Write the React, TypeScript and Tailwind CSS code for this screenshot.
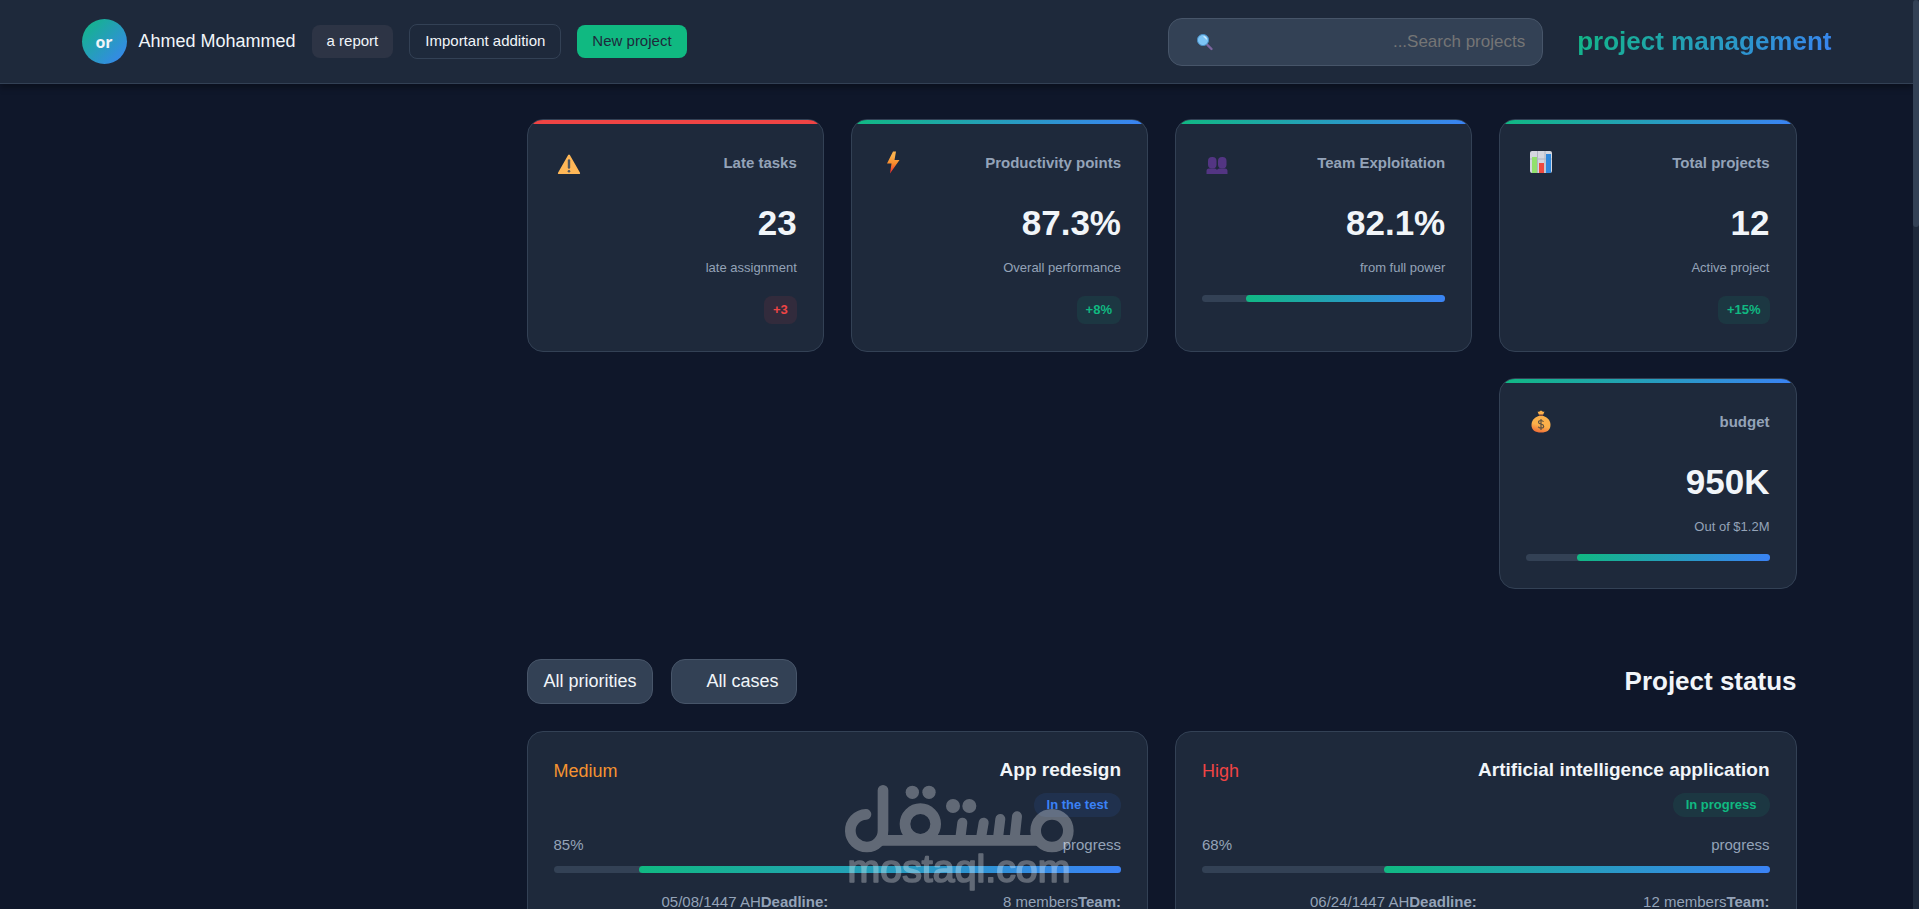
import React from 'react';

interface Stat {
  title: string;
  value: string;
  note: string;
  icon: React.ReactNode;
  change?: string;
  progress?: number;
  late?: boolean;
}

interface Project {
  name: string;
  priority: 'High' | 'Medium';
  status: string;
  progress: number;
  team: string;
  deadline: string;
}

const SearchIcon = () => (
  <svg viewBox="0 0 18 18" className="w-[18px] h-[18px]" aria-hidden="true">
    <path d="M11 11.500 15.500 16" stroke="#7d659f" strokeWidth="2.400" strokeLinecap="round" />
    <circle cx="7" cy="7" r="5.600" fill="#7cc4f5" stroke="#4a8cc0" strokeWidth="1" />
    <path d="M8 3.600a3.600 3.600 0 0 1 2.400 2.400" stroke="#d3eeff" strokeWidth="1.200" fill="none" strokeLinecap="round" />
  </svg>
);

const ChartIcon = () => (
  <svg viewBox="-1 1 28 28" className="w-7 h-7" aria-hidden="true">
    <rect x="3" y="3" width="22" height="22" rx="2" fill="#d5d7e0" />
    <path d="M3 11h22M10.500 3v22M18 3v22" stroke="#b0b4c2" strokeWidth="1" />
    <rect x="5" y="9" width="5" height="16" fill="#92e06d" />
    <rect x="12" y="15" width="5" height="10" fill="#ef4a3f" />
    <rect x="19" y="6" width="5" height="19" fill="#2f88dc" />
  </svg>
);

const TeamIcon = () => (
  <svg viewBox="-1 0 28 28" className="w-7 h-7" fill="#533583" aria-hidden="true">
    <rect x="5" y="8" width="8.500" height="11.500" rx="4" />
    <rect x="15" y="8" width="8.500" height="11.500" rx="4" />
    <path d="M3.500 25v-3a2.500 2.500 0 0 1 2.500-2.500h5.500a2.500 2.500 0 0 1 2.500 1.500 2.500 2.500 0 0 1 2.500-1.500H22a2.500 2.500 0 0 1 2.500 2.500v3z" />
  </svg>
);

const BoltIcon = () => (
  <svg viewBox="-1 1 28 28" className="w-7 h-7" aria-hidden="true">
    <defs>
      <linearGradient id="bolt" x1="0" y1="0" x2="0" y2="1">
        <stop offset="0.2" stopColor="#fcb04b" />
        <stop offset="0.55" stopColor="#f98a2b" />
        <stop offset="0.9" stopColor="#f0392f" />
      </linearGradient>
    </defs>
    <path d="M14 3.500 8 15.500h4.500L11 25.500 20.500 12h-5L17 3.500z" fill="url(#bolt)" />
  </svg>
);

const WarningIcon = () => (
  <svg viewBox="-1 0 28 28" className="w-7 h-7" aria-hidden="true">
    <path d="M13 6.300a1.200 1.200 0 0 1 2 0L25 23.800a.8.800 0 0 1-.8 1.200H3.800a.8.800 0 0 1-.8-1.200z" fill="#ffb757" />
    <path d="M14 11.500v7" stroke="#50565f" strokeWidth="2.400" strokeLinecap="round" />
    <circle cx="14" cy="22.200" r="1.300" fill="#50565f" />
  </svg>
);

const MoneyIcon = () => (
  <svg viewBox="-1 1 28 28" className="w-7 h-7" aria-hidden="true">
    <defs>
      <linearGradient id="bag" x1="0.6" y1="0" x2="0.3" y2="1">
        <stop offset="0.55" stopColor="#fbb04a" />
        <stop offset="1" stopColor="#ef6a35" />
      </linearGradient>
    </defs>
    <path d="M10.500 4.500c1 .6 1.800 0 3.500-1 1.700 1 2.500 1.600 3.500 1L16 8h-4z" fill="#fbb04a" />
    <path d="M11.500 9c-4.500 1.500-7 5-7 9 0 5 3.500 7.500 9.500 7.500s9.500-2.500 9.500-7.500c0-4-2.500-7.500-7-9z" fill="url(#bag)" />
    <path d="M12 8h4" stroke="#9b5a3c" strokeWidth="1.600" />
    <path
      d="M16.500 14.800c-.6-1-1.500-1.300-2.500-1.300-1.500 0-2.500.7-2.500 1.800 0 2.700 5.200 1.100 5.200 3.900 0 1.200-1.200 1.900-2.700 1.900-1.300 0-2.300-.5-2.800-1.400M14 12v11"
      stroke="#5d5142"
      strokeWidth="1.200"
      fill="none"
    />
  </svg>
);

const stats: Stat[] = [
  { title: 'Total projects', value: '12', note: 'Active project', icon: <ChartIcon />, change: '+15%' },
  { title: 'Team Exploitation', value: '82.1%', note: 'from full power', icon: <TeamIcon />, progress: 82.1 },
  { title: 'Productivity points', value: '87.3%', note: 'Overall performance', icon: <BoltIcon />, change: '+8%' },
  { title: 'Late tasks', value: '23', note: 'late assignment', icon: <WarningIcon />, change: '+3', late: true },
  { title: 'budget', value: '950K', note: 'Out of $1.2M', icon: <MoneyIcon />, progress: 79 },
];

const projects: Project[] = [
  {
    name: 'Artificial intelligence application',
    priority: 'High',
    status: 'In progress',
    progress: 68,
    team: '12 members',
    deadline: '06/24/1447 AH',
  },
  {
    name: 'App redesign',
    priority: 'Medium',
    status: 'In the test',
    progress: 85,
    team: '8 members',
    deadline: '05/08/1447 AH',
  },
];

const ProgressBar: React.FC<{ value: number }> = ({ value }) => (
  <div className="h-[7px] w-full rounded-full bg-[#334155]">
    <div
      className="h-full rounded-full bg-[linear-gradient(135deg,#10b981,#3b82f6)]"
      style={{ width: `${value}%` }}
    />
  </div>
);

const StatCard: React.FC<{ stat: Stat }> = ({ stat }) => (
  <article className="relative overflow-hidden rounded-2xl border border-[#334155] bg-[#1e293b] px-[26px] py-[27px]">
    <div
      className={`absolute inset-x-0 top-0 h-1 ${
        stat.late ? 'bg-[#ef4444]' : 'bg-[linear-gradient(135deg,#10b981,#3b82f6)]'
      }`}
    />
    <div className="mb-[15px] flex h-8 items-center justify-between">
      <h3 className="text-[15px] font-bold text-[#94a3b8]">{stat.title}</h3>
      {stat.icon}
    </div>
    <div dir="ltr" className="mb-[6px] text-right text-[35px] leading-[58px] font-bold text-[#f1f5f9]">
      {stat.value}
    </div>
    <p className="text-[13px] leading-5 text-[#94a3b8]">{stat.note}</p>
    {stat.progress !== undefined && (
      <div className="mt-[17px]">
        <ProgressBar value={stat.progress} />
      </div>
    )}
    {stat.change && (
      <span
        dir="ltr"
        className={`mt-[18px] inline-flex h-7 items-center rounded-lg px-[9px] text-[13px] font-bold ${
          stat.late ? 'bg-[#ef4444]/10 text-[#ef4444]' : 'bg-[#10b981]/10 text-[#10b981]'
        }`}
      >
        {stat.change}
      </span>
    )}
  </article>
);

const ProjectCard: React.FC<{ project: Project }> = ({ project }) => (
  <article className="rounded-2xl border border-[#334155] bg-[#1e293b] px-[26px] py-[27px]">
    <div className="mb-4 flex items-start justify-between">
      <div className="flex flex-col items-start">
        <h3 className="mb-3 text-[19px] leading-[22px] font-bold text-[#f1f5f9]">{project.name}</h3>
        <span
          className={`rounded-full px-[13px] text-[13px] leading-6 font-bold ${
            project.status === 'In progress' ? 'bg-[#10b981]/10 text-[#10b981]' : 'bg-[#3b82f6]/10 text-[#3b82f6]'
          }`}
        >
          {project.status}
        </span>
      </div>
      <span
        className={`text-[18px] leading-6 ${project.priority === 'High' ? 'text-[#ef4444]' : 'text-[#f59331]'}`}
      >
        {project.priority}
      </span>
    </div>
    <div className="mb-[9px] flex justify-between text-[15px] leading-6 text-[#94a3b8]">
      <span>progress</span>
      <span dir="ltr">{project.progress}%</span>
    </div>
    <ProgressBar value={project.progress} />
    <div className="mt-[17px] grid grid-cols-2 gap-[18px] text-[15px] leading-6 text-[#94a3b8]">
      <div className="flex">
        <strong dir="ltr">Team:</strong>
        <span dir="ltr">{project.team}</span>
      </div>
      <div className="flex">
        <strong dir="ltr">Deadline:</strong>
        <span dir="ltr">{project.deadline}</span>
      </div>
    </div>
  </article>
);

const Watermark = () => (
  <svg
    viewBox="0 0 840 417"
    className="pointer-events-none fixed bottom-0 left-1/2 w-[280px] -translate-x-1/2 opacity-30"
    aria-hidden="true"
  >
    <g fill="none" stroke="#fff" strokeWidth="32" strokeLinecap="round">
      <path d="M138 133a49 49 0 1 0 51 49V61" />
      <path d="M176 211H664" strokeLinecap="butt" />
      <circle cx="301" cy="162" r="46" />
      <circle cx="696" cy="182" r="49" />
      <path d="M421 204 427 158M483 204 491 158M534 204 541 147M584 204 591 139" strokeWidth="30" />
    </g>
    <g fill="#fff">
      <circle cx="277" cy="67" r="20" />
      <circle cx="327" cy="67" r="20" />
      <circle cx="399" cy="108" r="21" />
      <circle cx="448" cy="108" r="21" />
      <text
        x="417"
        y="336"
        fontSize="118"
        textAnchor="middle"
        stroke="#fff"
        strokeWidth="5"
        strokeLinejoin="round"
      >
        mostaql.com
      </text>
    </g>
  </svg>
);

const App: React.FC = () => {
  return (
    <div className="flex h-screen bg-[#0f172a] font-['Liberation_Sans',Arial,sans-serif] text-[#f1f5f9]">
      <div dir="rtl" className="min-w-0 flex-1 overflow-y-auto [scrollbar-width:none]">
        <header className="relative border-b border-[#334155] bg-[#1e293b] shadow-[0_4px_6px_rgba(0,0,0,0.3)]">
          <div className="mx-auto flex h-[83px] max-w-[1750px] items-center justify-between">
            <div className="flex items-center gap-[34px]">
              <h1
                dir="ltr"
                className="bg-[linear-gradient(135deg,#10b981,#3b82f6)] bg-clip-text text-[26px] font-bold text-transparent"
              >
                project management
              </h1>
              <div className="relative">
                <input
                  type="text"
                  aria-label="Search projects"
                  placeholder="Search projects..."
                  className="h-12 w-[375px] rounded-[14px] border border-[#475569] bg-[#334155] px-[17px] text-[17px] text-[#f1f5f9] placeholder:text-[#757575]"
                />
                <span className="absolute top-1/2 left-7 -translate-y-1/2">
                  <SearchIcon />
                </span>
              </div>
            </div>
            <div dir="ltr" className="flex items-center gap-4 text-[15px]">
              <div className="flex items-center gap-3">
                <div className="flex size-[45px] items-center justify-center rounded-full bg-[linear-gradient(135deg,#10b981,#3b82f6)] font-['Open_Sans',sans-serif] text-base font-bold">
                  or
                </div>
                <span className="text-[18px]">Ahmed Mohammed</span>
              </div>
              <button className="h-[33px] rounded-lg bg-[#2d3445] px-[15px]">a report</button>
              <button className="h-[35px] rounded-lg border border-[#334155] px-[15px]">Important addition</button>
              <button className="h-[33px] rounded-lg bg-[#10b981] px-[15px] text-[#1e293b]">New project</button>
            </div>
          </div>
        </header>

        <div className="mx-auto flex max-w-[1750px] px-[35px] pt-[35px]">
          <main className="min-w-0 flex-1">
            <section className="mb-[70px] grid grid-cols-4 gap-x-[27px] gap-y-[26px]">
              {stats.map((stat) => (
                <StatCard key={stat.title} stat={stat} />
              ))}
            </section>

            <section>
              <div className="mb-[27px] flex items-center justify-between">
                <h2 className="text-[26px] font-bold">Project status</h2>
                <div className="flex gap-[18px]">
                  <select
                    aria-label="Cases"
                    className="h-[45px] w-[126px] appearance-none rounded-[14px] border border-[#475569] bg-[#334155] px-[17px] text-[18px]"
                  >
                    <option>All cases</option>
                  </select>
                  <select
                    aria-label="Priorities"
                    className="h-[45px] w-[126px] appearance-none rounded-[14px] border border-[#475569] bg-[#334155] px-[15px] text-[18px]"
                  >
                    <option>All priorities</option>
                  </select>
                </div>
              </div>
              <div className="grid grid-cols-2 gap-[27px]">
                {projects.map((project) => (
                  <ProjectCard key={project.name} project={project} />
                ))}
              </div>
            </section>
          </main>
          <aside className="w-[410px] shrink-0" />
        </div>
      </div>

      <div className="w-[6px] shrink-0 bg-[#1e293b]">
        <div className="h-1/4 rounded-full bg-[#334155]" />
      </div>

      <Watermark />
    </div>
  );
};

export default App;
